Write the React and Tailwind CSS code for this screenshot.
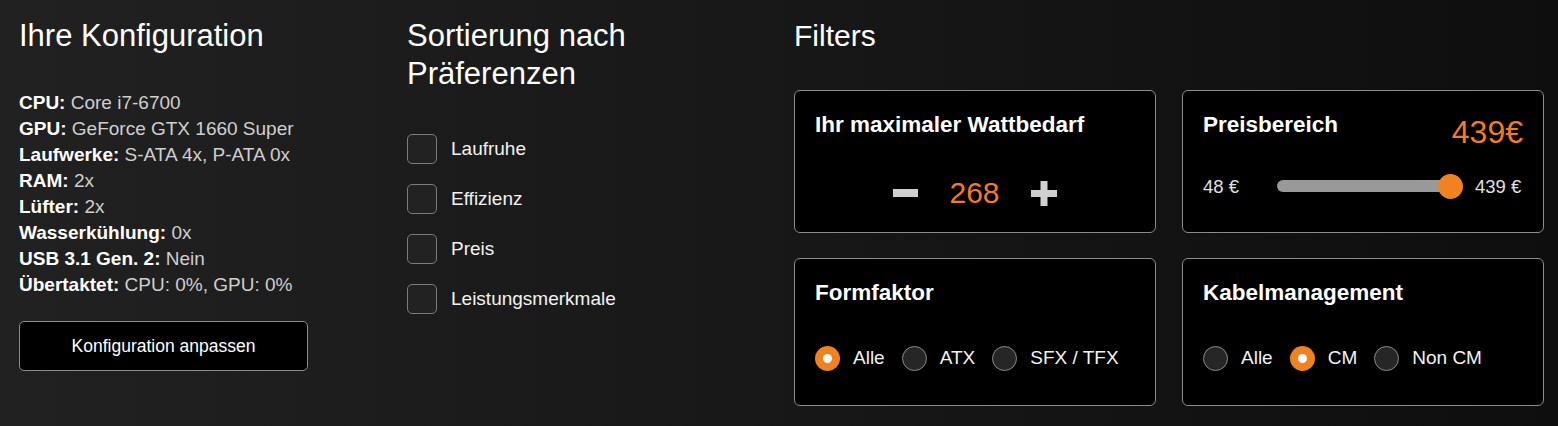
import { useState } from 'react'

const specs = [
  ['CPU:', 'Core i7-6700'],
  ['GPU:', 'GeForce GTX 1660 Super'],
  ['Laufwerke:', 'S-ATA 4x, P-ATA 0x'],
  ['RAM:', '2x'],
  ['Lüfter:', '2x'],
  ['Wasserkühlung:', '0x'],
  ['USB 3.1 Gen. 2:', 'Nein'],
  ['Übertaktet:', 'CPU: 0%, GPU: 0%'],
]

const prefs = ['Laufruhe', 'Effizienz', 'Preis', 'Leistungsmerkmale']

const Radio = ({ label, checked, onClick }) => (
  <div onClick={onClick} className="flex items-center shrink-0 mr-[17px] cursor-pointer whitespace-nowrap">
    {checked ? (
      <span className="shrink-0 w-[25px] h-[25px] rounded-full bg-[#f0831f] flex items-center justify-center">
        <span className="w-[9px] h-[9px] rounded-full bg-white"></span>
      </span>
    ) : (
      <span className="shrink-0 w-[25px] h-[25px] rounded-full bg-[#262626] border border-[#8a8a8a]"></span>
    )}
    <span className="ml-[13px] text-[19px] leading-[26px] text-[#f2f2f2]">{label}</span>
  </div>
)

const Card = ({ title, className, children, right }) => (
  <div className={`bg-black border border-[#8c8c8c] rounded-[6px] px-5 pt-[21px] ${className}`}>
    <div className="flex items-start justify-between">
      <h3 className="text-[22.5px] leading-[26px] font-bold text-white whitespace-nowrap">{title}</h3>
      {right}
    </div>
    {children}
  </div>
)

export default function App() {
  const [watt, setWatt] = useState(268)
  const [form, setForm] = useState('Alle')
  const [kabel, setKabel] = useState('CM')
  const [checked, setChecked] = useState({})

  return (
    <div
      className="h-[426px] w-full bg-gradient-to-r from-[#212121] to-[#0e0e0e] text-white grid grid-cols-[388px_387px_1fr] pl-[19px] pr-[14px] overflow-hidden"
      style={{ fontFamily: '"Liberation Sans", Arial, sans-serif' }}
    >
      {/* Konfiguration */}
      <div className="pt-[17px]">
        <h2 className="text-[31px] leading-[38px] text-white">Ihre Konfiguration</h2>
        <div className="mt-[35px] text-[19px] leading-[26px]">
          {specs.map(([k, v]) => (
            <div key={k} className="whitespace-nowrap">
              <span className="font-bold text-white">{k}</span>{' '}
              <span className="text-[#cfcfcf]">{v}</span>
            </div>
          ))}
        </div>
        <button className="mt-[23px] w-[289px] h-[50px] bg-black border border-[#8c8c8c] rounded-[5px] text-[17.5px] text-white">
          Konfiguration anpassen
        </button>
      </div>

      {/* Sortierung */}
      <div className="pt-[17px]">
        <h2 className="text-[31px] leading-[38px] text-white">
          Sortierung nach
          <br />
          Präferenzen
        </h2>
        <div className="mt-[41px] flex flex-col gap-5">
          {prefs.map((p) => (
            <label key={p} className="flex items-center cursor-pointer">
              <span
                onClick={() => setChecked({ ...checked, [p]: !checked[p] })}
                className="shrink-0 w-[30px] h-[30px] rounded-[5px] border border-[#7c7c7c] bg-[#222222]"
              ></span>
              <span className="ml-[14px] text-[19px] leading-[26px] text-[#f2f2f2]">{p}</span>
            </label>
          ))}
        </div>
      </div>

      {/* Filters */}
      <div className="pt-[17px]">
        <h2 className="text-[30px] leading-[38px] text-white">Filters</h2>
        <div className="mt-[35px] grid grid-cols-2 gap-x-[26px] gap-y-[25px]">
          <Card title="Ihr maximaler Wattbedarf" className="h-[143px]">
            <div className="mt-[40px] flex items-center justify-center gap-[31px]">
              <button onClick={() => setWatt(watt - 1)} className="w-[25px] h-[30px] flex items-center">
                <svg width="25" height="8" viewBox="0 0 25 8">
                  <rect width="25" height="8" fill="#d0d0d0" />
                </svg>
              </button>
              <span className="text-[30px] leading-[30px] text-[#f47c20]">{watt}</span>
              <button onClick={() => setWatt(watt + 1)} className="w-[26px] h-[30px] flex items-center">
                <svg width="26" height="25" viewBox="0 0 26 25">
                  <rect x="0" y="9" width="26" height="7" fill="#d0d0d0" />
                  <rect x="9.5" y="0" width="7" height="25" fill="#d0d0d0" />
                </svg>
              </button>
            </div>
          </Card>

          <Card
            title="Preisbereich"
            className="h-[143px]"
            right={<span className="mt-[2px] text-[32px] leading-[36px] text-[#f47c20]">439€</span>}
          >
            <div className="mt-[23px] flex items-center">
              <span className="w-[74px] text-[18.5px] text-[#e0e0e0]">48 €</span>
              <div className="relative w-[186px] h-[25px]">
                <div className="absolute left-0 right-[12px] top-[6px] h-[12px] rounded-full bg-[#999999]"></div>
                <div className="absolute right-0 top-0 w-[25px] h-[25px] rounded-full bg-[#f0831f]"></div>
              </div>
              <span className="ml-[12px] text-[18.5px] text-[#e0e0e0]">439 €</span>
            </div>
          </Card>

          <Card title="Formfaktor" className="h-[148px]">
            <div className="mt-[39px] flex items-center">
              {['Alle', 'ATX', 'SFX / TFX'].map((o) => (
                <Radio key={o} label={o} checked={form === o} onClick={() => setForm(o)} />
              ))}
            </div>
          </Card>

          <Card title="Kabelmanagement" className="h-[148px]">
            <div className="mt-[39px] flex items-center">
              {['Alle', 'CM', 'Non CM'].map((o) => (
                <Radio key={o} label={o} checked={kabel === o} onClick={() => setKabel(o)} />
              ))}
            </div>
          </Card>
        </div>
      </div>
    </div>
  )
}
